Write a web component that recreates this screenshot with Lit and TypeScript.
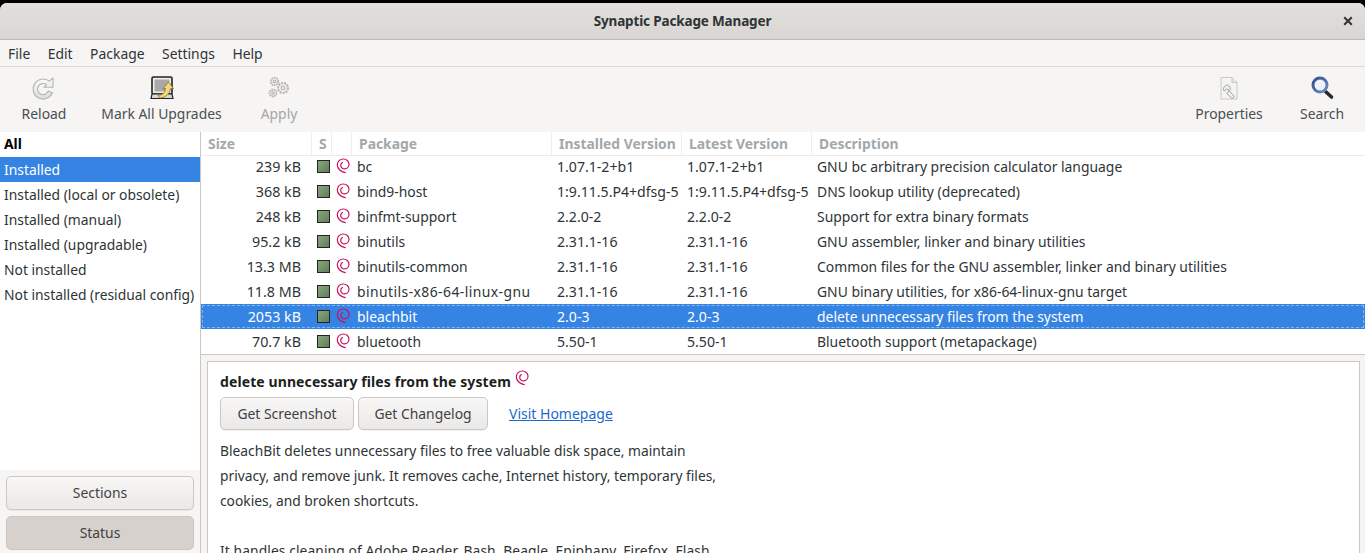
import { LitElement, html, css, svg } from "lit";
import { customElement } from "lit/decorators.js";

const rows = [
  ["239 kB", "bc", "1.07.1-2+b1", "1.07.1-2+b1", "GNU bc arbitrary precision calculator language"],
  ["368 kB", "bind9-host", "1:9.11.5.P4+dfsg-5", "1:9.11.5.P4+dfsg-5", "DNS lookup utility (deprecated)"],
  ["248 kB", "binfmt-support", "2.2.0-2", "2.2.0-2", "Support for extra binary formats"],
  ["95.2 kB", "binutils", "2.31.1-16", "2.31.1-16", "GNU assembler, linker and binary utilities"],
  ["13.3 MB", "binutils-common", "2.31.1-16", "2.31.1-16", "Common files for the GNU assembler, linker and binary utilities"],
  ["11.8 MB", "binutils-x86-64-linux-gnu", "2.31.1-16", "2.31.1-16", "GNU binary utilities, for x86-64-linux-gnu target"],
  ["2053 kB", "bleachbit", "2.0-3", "2.0-3", "delete unnecessary files from the system"],
  ["70.7 kB", "bluetooth", "5.50-1", "5.50-1", "Bluetooth support (metapackage)"],
];

const swirl = svg`<path d="M10.200 14.600C6 14 2.300 11 2.300 6.800 2.300 3.400 5 1 8.300 1c3.200 0 5.700 2.300 5.700 5.200 0 2.800-2.100 4.700-4.400 4.700-2.300 0-3.900-1.600-3.900-3.600 0-1.300.7-2.300 1.800-2.800" fill="none" stroke="#c8105a" stroke-width="1.200" stroke-linecap="round"/>`;

@customElement("app-root")
export class AppRoot extends LitElement {
  static styles = css`
    :host { display: block; width: 1365px; height: 553px; overflow: hidden; background: #000; font-family: "Noto Sans", sans-serif; font-size: 13.9px; color: #2e3436; }
    .win { margin-top: 3px; height: 550px; display: flex; flex-direction: column; background: #f6f5f4; border-radius: 7px 7px 0 0; overflow: hidden; }
    .title { height: 36px; flex: none; display: flex; align-items: center; justify-content: center; position: relative; background: linear-gradient(#e2e0de, #d9d6d2); border-bottom: 1px solid #bfb8b1; font-weight: 700; font-size: 13.5px; letter-spacing: -0.15px; color: #2e3436; }
    .close { position: absolute; right: 11px; top: 12px; width: 12px; height: 12px; }
    .menu { height: 26px; flex: none; display: flex; gap: 17.500px; align-items: center; padding-left: 8px; border-bottom: 1px solid #dcd9d5; }
    .toolbar { height: 65px; flex: none; display: flex; background: #f6f5f4; }
    .tool { display: flex; flex-direction: column; align-items: center; padding-top: 8px; box-sizing: border-box; }
    .tool svg { width: 26px; height: 26px; display: block; }
    .tool span { margin-top: 3px; line-height: 20px; color: #4a4f50; }
    .tool.dis span { color: #a2a6a7; }
    .t1 { width: 88px; }
    .t2 { width: 147px; }
    .t3 { width: 88px; }
    .spacer { flex: 1; }
    .t4 { width: 106px; }
    .t5 { width: 80px; margin-right: 3px; }
    .body { flex: 1; display: flex; min-height: 0; background: #fff; }
    .side { width: 200px; flex: none; border-right: 1px solid #cdc7c2; display: flex; flex-direction: column; }
    .filters { flex: 1; font-size: 13.85px; }
    .f { height: 25px; line-height: 25px; padding-left: 4px; color: #2e3436; white-space: nowrap; }
    .f.all { font-weight: 700; color: #000; line-height: 24px; }
    .f.sel { background: #3584e4; color: #fff; }
    .side-btns { height: 83px; flex: none; background: #f6f5f4; padding: 6px 6px 3px; box-sizing: border-box; display: flex; flex-direction: column; gap: 6px; }
    .btn { box-sizing: border-box; border: 1px solid #cdc7c2; border-radius: 5px; background: linear-gradient(#f8f7f6, #ebe9e7); display: flex; align-items: center; justify-content: center; color: #3d4244; box-shadow: 0 1px 1px rgba(0,0,0,.06); }
    .side-btns .btn { height: 34px; padding-bottom: 2px; }
    .side-btns .btn.on { background: #d6d1cd; border-color: #cdc7c2; box-shadow: none; }
    .main { flex: 1; min-width: 0; display: flex; flex-direction: column; }
    .grid { display: grid; grid-template-columns: 111px 20px 20px 200px 130px 130px 1fr; }
    .head { height: 24px; box-sizing: border-box; flex: none; border-bottom: 1px solid #ecebe9; font-weight: 700; font-size: 13.900px; color: #a3a8aa; }
    .head div { line-height: 23px; padding-left: 7px; border-right: 1px solid #f0efee; white-space: nowrap; overflow: hidden; }
    .head div:last-child { border-right: 0; }
    .list { height: 198px; flex: none; border-bottom: 1px solid #cdc7c2; overflow: hidden; }
    .rows { margin-top: -2px; }
    .row { height: 25px; line-height: 25px; color: #2e3436; position: relative; }
    .row > div { white-space: nowrap; overflow: hidden; padding-left: 5px; }
    .row .size { text-align: right; padding: 0 11px 0 0; font-size: 14.300px; }
    .row .st { padding: 0; display: flex; align-items: center; }
    .row .ic { padding: 0; display: flex; align-items: center; }
    .row .ver { font-size: 14.100px; }
    .row .wide { letter-spacing: 0.440px; }
    .box { width: 13px; height: 13px; box-sizing: border-box; margin-left: 5px; border: 1px solid #222; background: linear-gradient(135deg, #8aa581, #5f8059); }
    .swirl { width: 16px; height: 16px; display: block; margin-left: 3px; margin-top: -1px; }
    .row.sel { background: #3584e4; color: #fff; outline: 1px dashed rgba(255,255,255,.4); outline-offset: -2px; }
    .details { flex: 1; min-height: 0; background: #f6f5f4; padding: 6px 5px 0 6px; }
    .pane { height: 100%; box-sizing: border-box; background: #fff; border: 1px solid #cdc7c2; border-bottom: 0; padding: 6px 0 0 12px; line-height: 25px; overflow: hidden; }
    .dh { font-weight: 700; display: flex; align-items: flex-start; height: 26px; line-height: 27px; color: #1c1f20; font-size: 14px; letter-spacing: 0.1px; }
    .dh svg { width: 16px; height: 16px; margin-left: 3px; margin-top: 2px; }
    .acts { display: flex; gap: 4px; align-items: center; height: 33px; margin-top: 3px; margin-bottom: 8px; }
    .acts .btn { height: 33px; }
    .b1 { width: 134px; }
    .b2 { width: 130px; }
    a { margin-left: 17px; color: #1b6acb; text-decoration: underline; font-size: 14px; }
    .d { white-space: nowrap; height: 25px; font-size: 13.800px; }
    .d.last { letter-spacing: 0.100px; }
  `;

  render() {
    return html`<div class="win">
      <div class="title">Synaptic Package Manager
        <svg class="close" viewBox="0 0 12 12"><path d="M2.200 2.200l7.600 7.600M9.800 2.200L2.200 9.800" stroke="#2e3436" stroke-width="2"/></svg>
      </div>
      <div class="menu"><span>File</span><span>Edit</span><span>Package</span><span>Settings</span><span>Help</span></div>
      <div class="toolbar">
        <div class="tool t1">
          <svg viewBox="0 0 26 26">
            <defs><linearGradient id="rl" x1="0" y1="0" x2="0" y2="1"><stop offset="0" stop-color="#fbfbfa"/><stop offset="1" stop-color="#dcdcda"/></linearGradient></defs>
            <path d="M18.300 6.200A10 10 0 1 0 21.300 18L17.200 16A5.500 5.500 0 1 1 15.500 9.800L13 12.200H22V3z" fill="url(#rl)" stroke="#b4b5b3" stroke-width="1.100" stroke-linejoin="round"/>
          </svg>
          <span>Reload</span>
        </div>
        <div class="tool t2">
          <svg viewBox="0 0 26 26">
            <rect x="3" y="2" width="20" height="17" rx="1.500" fill="#eee" stroke="#222" stroke-width="1.600"/>
            <rect x="5.500" y="4.500" width="15" height="12" fill="#a9a9aa"/>
            <path d="M3 19h20l1 4.500H2z" fill="#d8d8d6" stroke="#222" stroke-width="1.200"/>
            <path d="M9 20C13 20.500 16 18 16.500 13.500L14 13.500 19.500 7 24.500 13.500 21.500 13.500C21 19 16 23 10.500 23Z" fill="#f3d77e" stroke="#8a6d1e" stroke-width=".8"/>
          </svg>
          <span>Mark All Upgrades</span>
        </div>
        <div class="tool dis t3">
          <svg viewBox="0 0 26 26" fill="#eceaea" stroke="#b5b5b3" stroke-width="1.100">
            <circle cx="8.500" cy="6.500" r="3.800" stroke-dasharray="1.600 .8" stroke-width="1.800"/><circle cx="8.500" cy="6.500" r="1.300"/>
            <circle cx="17" cy="13" r="5" stroke-dasharray="2 1" stroke-width="2"/><circle cx="17" cy="13" r="1.800"/>
            <circle cx="7" cy="18" r="3.500" stroke-dasharray="1.600 .8" stroke-width="1.800"/><circle cx="7" cy="18" r="1.200"/>
          </svg>
          <span>Apply</span>
        </div>
        <div class="spacer"></div>
        <div class="tool t4">
          <svg viewBox="0 0 26 26">
            <path d="M5 2.500h11l5 5V24H5z" fill="#f4f4f2" stroke="#c8c8c6" stroke-width="1"/>
            <path d="M16 2.500v5h5" fill="#e4e4e2" stroke="#c8c8c6"/>
            <path d="M11.500 10a4.200 4.200 0 0 0-3.800 5.600l.3.500 2.300-2 2.100.5.500 2-2.200 1.800 5.300 5 2.500-1.800-5-5.200a4.200 4.200 0 0 0-2-6.400z" fill="#f0f0ee" stroke="#a3a3a1" stroke-width="1"/>
          </svg>
          <span>Properties</span>
        </div>
        <div class="tool t5">
          <svg viewBox="0 0 26 26">
            <defs><linearGradient id="sr" x1="0" y1="0" x2="1" y2="1"><stop offset="0" stop-color="#2e4f8c"/><stop offset="1" stop-color="#6f8fc2"/></linearGradient></defs>
            <path d="M16.500 16.500l6 5.500" stroke="#2a2a2a" stroke-width="3.600" stroke-linecap="round"/>
            <circle cx="11" cy="10" r="7" fill="#eef1f6" stroke="url(#sr)" stroke-width="3"/>
          </svg>
          <span>Search</span>
        </div>
      </div>
      <div class="body">
        <div class="side">
          <div class="filters">
            <div class="f all">All</div>
            <div class="f sel">Installed</div>
            <div class="f">Installed (local or obsolete)</div>
            <div class="f">Installed (manual)</div>
            <div class="f">Installed (upgradable)</div>
            <div class="f">Not installed</div>
            <div class="f">Not installed (residual config)</div>
          </div>
          <div class="side-btns">
            <div class="btn">Sections</div>
            <div class="btn on">Status</div>
          </div>
        </div>
        <div class="main">
          <div class="grid head">
            <div>Size</div><div>S</div><div></div><div>Package</div><div>Installed Version</div><div>Latest Version</div><div>Description</div>
          </div>
          <div class="list"><div class="rows">
            ${rows.map((r) => html`<div class="grid row ${r[1] === "bleachbit" ? "sel" : ""}">
              <div class="size">${r[0]}</div>
              <div class="st"><span class="box"></span></div>
              <div class="ic"><svg class="swirl" viewBox="0 0 16 16">${swirl}</svg></div>
              <div class="${r[1].includes("x86") ? "wide" : ""}">${r[1]}</div><div class="ver">${r[2]}</div><div class="ver">${r[3]}</div><div>${r[4]}</div>
            </div>`)}
          </div></div>
          <div class="details">
            <div class="pane">
              <div class="dh"><span>delete unnecessary files from the system</span><svg viewBox="0 0 16 16">${swirl}</svg></div>
              <div class="acts">
                <div class="btn b1">Get Screenshot</div>
                <div class="btn b2">Get Changelog</div>
                <a href="#">Visit Homepage</a>
              </div>
              <div class="d">BleachBit deletes unnecessary files to free valuable disk space, maintain</div>
              <div class="d">privacy, and remove junk. It removes cache, Internet history, temporary files,</div>
              <div class="d">cookies, and broken shortcuts.</div>
              <div class="d"></div>
              <div class="d last">It handles cleaning of Adobe Reader, Bash, Beagle, Epiphany, Firefox, Flash,</div>
            </div>
          </div>
        </div>
      </div>
    </div>`;
  }
}
